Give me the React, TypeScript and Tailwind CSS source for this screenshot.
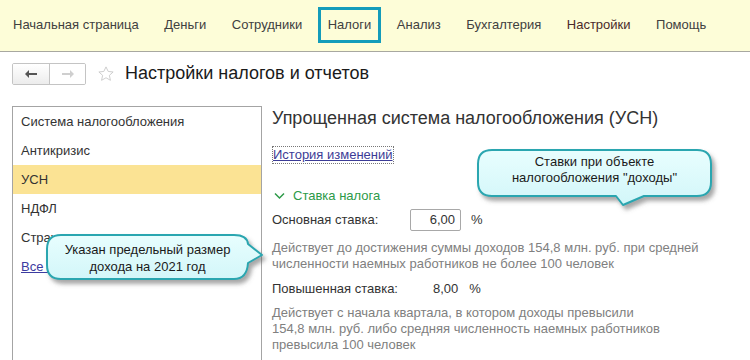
import React from 'react';

const font = { fontFamily: '"Liberation Sans", Arial, sans-serif' };

const navItems = ['Начальная страница', 'Деньги', 'Сотрудники', 'Налоги', 'Анализ', 'Бухгалтерия', 'Настройки', 'Помощь'];

const sections = ['Система налогообложения', 'Антикризис', 'УСН', 'НДФЛ', 'Страховые взносы'];

function Callouts() {
  return (
    <svg className="absolute left-0 top-0 pointer-events-none" width="750" height="360" viewBox="0 0 750 360">
      <defs>
        <linearGradient id="fillA" x1="0" y1="0" x2="0" y2="1">
          <stop offset="0" stopColor="#e8fefe" />
          <stop offset="1" stopColor="#d2f6f9" />
        </linearGradient>
        <filter id="shade" x="-10%" y="-20%" width="130%" height="160%">
          <feDropShadow dx="3" dy="4" stdDeviation="2" floodColor="#606060" floodOpacity="0.55" />
        </filter>
      </defs>
      {/* rates bubble */}
      <path
        d="M492 150 H697 Q711 150 711 164 V182 Q711 196 697 196 H644 L623 205 L616 196 H492 Q478 196 478 182 V164 Q478 150 492 150 Z"
        fill="url(#fillA)"
        stroke="#2aa6b0"
        strokeWidth="2"
        strokeLinejoin="round"
        filter="url(#shade)"
      />
      {/* limit bubble */}
      <path
        d="M61 235 H234 Q247 235 248 244 L262 255 L248 263 Q247 279 234 279 H61 Q47 279 47 265 V249 Q47 235 61 235 Z"
        fill="url(#fillA)"
        stroke="#2aa6b0"
        strokeWidth="2"
        strokeLinejoin="round"
        filter="url(#shade)"
      />
    </svg>
  );
}

export default function App() {
  return (
    <div className="relative w-[750px] h-[360px] overflow-hidden bg-white text-[#333]" style={font}>
      {/* Section bar */}
      <div className="h-[52px] bg-[#fdfdd8] border-b border-[#a8a8a0] flex items-center pl-[13px] pb-[1px] gap-[25.5px] text-[13px] text-[#404040]">
        {navItems.map((item) =>
          item === 'Налоги' ? (
            <span key={item} className="-mx-[10px] px-[7px] h-[36px] flex items-center border-[3px] border-[#139cba]">
              {item}
            </span>
          ) : (
            <span key={item} className={item === 'Настройки' ? 'text-[#4a2a2a]' : ''}>
              {item}
            </span>
          )
        )}
      </div>

      {/* Form header */}
      <div className="flex items-center h-[42px] pl-[12px] pt-[1px]">
        <div className="flex h-[22px] border border-[#c4c4c4] rounded-[2px] overflow-hidden">
          <div className="w-[37px] flex items-center justify-center bg-gradient-to-b from-white to-[#ececec] border-r border-[#c4c4c4]">
            <svg width="14" height="10" viewBox="0 0 14 10">
              <path d="M5 1 L1 5 L5 9 Z" fill="#555" />
              <rect x="4" y="4" width="9" height="2" fill="#555" />
            </svg>
          </div>
          <div className="w-[35px] flex items-center justify-center bg-white">
            <svg width="14" height="10" viewBox="0 0 14 10">
              <path d="M9 1 L13 5 L9 9 Z" fill="#cfcfcf" />
              <rect x="1" y="4" width="9" height="2" fill="#cfcfcf" />
            </svg>
          </div>
        </div>
        <svg className="ml-[11px]" width="18" height="18" viewBox="0 0 24 24">
          <path
            d="M12 2.5 L14.9 8.6 L21.5 9.3 L16.5 13.8 L17.9 20.4 L12 17 L6.1 20.4 L7.5 13.8 L2.5 9.3 L9.1 8.6 Z"
            fill="none"
            stroke="#c8c8c8"
            strokeWidth="1.2"
            strokeLinejoin="round"
          />
        </svg>
        <span className="ml-[10px] text-[18px] text-[#1a1a1a]">Настройки налогов и отчетов</span>
      </div>

      {/* Body */}
      <div className="flex pt-[12px] pl-[12px]">
        <div className="w-[250px] h-[260px] border border-[#a4a4a4] shrink-0">
          {sections.map((s) => (
            <div
              key={s}
              className={'h-[29px] flex items-center pl-[8px] text-[13px] ' + (s === 'УСН' ? 'bg-[#fbe394]' : '')}
            >
              {s}
            </div>
          ))}
          <div className="h-[29px] flex items-center pl-[8px] text-[13px]">
            <span className="underline text-[#3c3ca0]">Все налоги и отчеты</span>
          </div>
        </div>

        <div className="pl-[10px] flex flex-col">
          <div className="text-[18px] leading-[22px] text-[#333] mt-[1px]">Упрощенная система налогообложения (УСН)</div>
          <div className="mt-[17px] flex">
            <span className="border border-dotted border-[#777] leading-[16px] text-[13px] text-[#3c3c96] underline">
              История изменений
            </span>
          </div>
          <div className="mt-[22px] flex items-center text-[13px] text-[#2d9a48]">
            <svg className="ml-[2px]" width="11" height="8" viewBox="0 0 11 8">
              <path d="M1 1.5 L5.5 6 L10 1.5" fill="none" stroke="#2d9a48" strokeWidth="1.5" />
            </svg>
            <span className="ml-[8px]">Ставка налога</span>
          </div>
          <div className="mt-[3px] flex items-center text-[13px] h-[22px]">
            <span className="w-[138px]">Основная ставка:</span>
            <span className="w-[51px] h-[22px] border border-[#a8a8a8] rounded-[2px] flex items-center justify-end pr-[5px]">6,00</span>
            <span className="ml-[10px]">%</span>
          </div>
          <div className="mt-[9px] text-[13px] leading-[16px] text-[#808080] whitespace-nowrap">
            Действует до достижения суммы доходов 154,8 млн. руб. при средней
            <br />
            численности наемных работников не более 100 человек
          </div>
          <div className="mt-[8px] flex items-center text-[13px] h-[18px]">
            <span className="w-[161px]">Повышенная ставка:</span>
            <span>8,00</span>
            <span className="ml-[11px]">%</span>
          </div>
          <div className="mt-[7px] text-[13px] leading-[16px] text-[#808080] whitespace-nowrap">
            Действует с начала квартала, в котором доходы превысили
            <br />
            154,8 млн. руб. либо средняя численность наемных работников
            <br />
            превысила 100 человек
          </div>
        </div>
      </div>

      <Callouts />
      <div className="absolute left-[478px] top-[154px] w-[233px] text-center text-[13px] leading-[16px] text-[#1a1a1a]">
        Ставки при объекте
        <br />
        налогообложения "доходы"
      </div>
      <div className="absolute left-[47px] top-[241px] w-[201px] text-center text-[13px] leading-[17px] text-[#1a1a1a]">
        Указан предельный размер
        <br />
        дохода на 2021 год
      </div>
    </div>
  );
}
